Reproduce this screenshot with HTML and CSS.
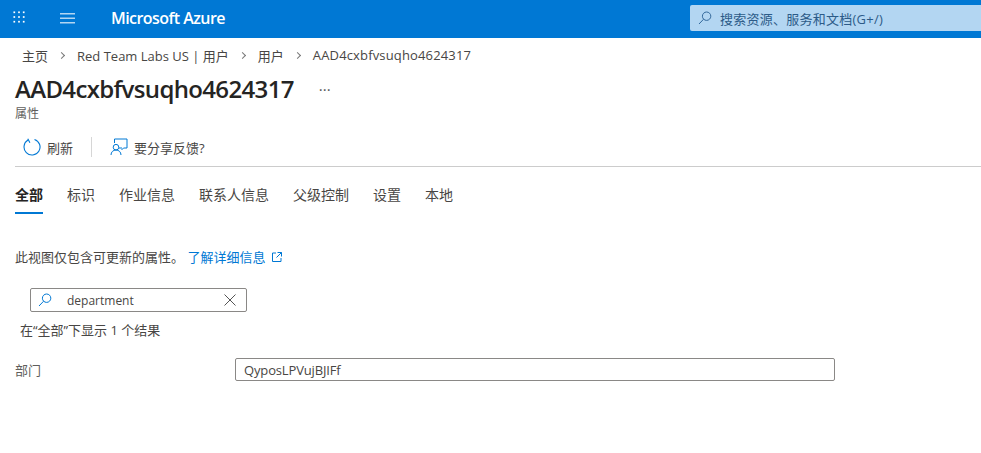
FILE: index.html
```html
<!DOCTYPE html>
<html lang="zh-CN">
<head>
<meta charset="utf-8">
<title>AAD4cxbfvsuqho4624317</title>
<link rel="stylesheet" href="styles.css">
</head>
<body>
<header class="topbar">
  <svg class="waffle" width="12" height="12" viewBox="0 0 14 14" fill="#fff"><rect x="0.5" y="0.5" width="2" height="2"/><rect x="6" y="0.5" width="2" height="2"/><rect x="11.5" y="0.5" width="2" height="2"/><rect x="0.5" y="6" width="2" height="2"/><rect x="6" y="6" width="2" height="2"/><rect x="11.5" y="6" width="2" height="2"/><rect x="0.5" y="11.5" width="2" height="2"/><rect x="6" y="11.5" width="2" height="2"/><rect x="11.5" y="11.5" width="2" height="2"/></svg>
  <svg class="burger" width="15" height="11" viewBox="0 0 15 11" fill="#b3d6f2"><rect y="0" width="15" height="1.5"/><rect y="4.5" width="15" height="1.5"/><rect y="9" width="15" height="1.5"/></svg>
  <div class="brand">Microsoft Azure</div>
  <div class="globalsearch">
    <svg width="14" height="14" viewBox="0 0 14 14" fill="none" stroke="#33699b" stroke-width="1"><circle cx="8.6" cy="5.2" r="4.2"/><path d="M5.6 8.2 1 13"/></svg>
    <span>搜索资源、服务和文档(G+/)</span>
  </div>
</header>
<nav class="crumbs">
  <span>主页</span><i class="chev"></i><span>Red Team Labs US | 用户</span><i class="chev"></i><span>用户</span><i class="chev"></i><span>AAD4cxbfvsuqho4624317</span>
</nav>
<div class="titlerow">
  <h1>AAD4cxbfvsuqho4624317</h1>
  <span class="more">···</span>
</div>
<div class="subtitle">属性</div>
<div class="toolbar">
  <button class="tool">
    <svg width="18" height="18" viewBox="0 0 18 18" fill="none" stroke="#0078d4" stroke-width="1.1"><path d="M11.5 1.400A8 8 0 1 1 5 2.100"/><path d="M4.800 .8 6.900 4.800"/></svg>
    <span>刷新</span>
  </button>
  <i class="vsep"></i>
  <button class="tool">
    <svg width="18" height="18" viewBox="0 0 18 18" fill="none" stroke="#0078d4" stroke-width="1"><path d="M4.500 5V1h12.500v9h-3.500l-2 2"/><path d="M9 10h3"/><circle cx="6" cy="9.200" r="2.800"/><path d="M1 17c0-3 2.200-5 5-5s5 2 5 5"/></svg>
    <span class="dark">要分享反馈?</span>
  </button>
</div>
<div class="tabs">
  <span class="tab active">全部</span>
  <span class="tab">标识</span>
  <span class="tab">作业信息</span>
  <span class="tab">联系人信息</span>
  <span class="tab">父级控制</span>
  <span class="tab">设置</span>
  <span class="tab">本地</span>
</div>
<p class="desc">此视图仅包含可更新的属性。 <a href="#">了解详细信息</a>
  <svg width="10" height="10" viewBox="0 0 10 10" fill="none" stroke="#0078d4" stroke-width="1"><path d="M4 1H.5v8.500h8.500V6"/><path d="M5.500.5h4v4M9.500.5 4.500 5.500"/></svg>
</p>
<div class="filter">
  <svg width="14" height="14" viewBox="0 0 14 14" fill="none" stroke="#0078d4" stroke-width="1"><circle cx="8.600" cy="5.200" r="4.200"/><path d="M5.600 8.200 1 13"/></svg>
  <span class="filtertext">department</span>
  <svg width="12" height="12" viewBox="0 0 12 12" fill="none" stroke="#555" stroke-width="1"><path d="M.5.500l11 11M11.500.500l-11 11"/></svg>
</div>
<div class="results">在“全部”下显示 1 个结果</div>
<div class="field">
  <label>部门</label>
  <div class="value">QyposLPVujBJIFf</div>
</div>
</body>
</html>
```
FILE: styles.css
```css
* { box-sizing: border-box; }
html, body { margin: 0; padding: 0; }
body {
  width: 981px; height: 453px; overflow: hidden; background: #fff;
  font-family: "Open Sans", "Noto Sans CJK SC", sans-serif;
  font-size: 13px; color: #323130;
}
.topbar { height: 38px; background: #0078d4; display: flex; align-items: center; padding-left: 13px; }
.waffle { flex: none; margin-top: -4px; }
.burger { margin-left: 35px; margin-top: -1px; flex: none; }
.brand { margin-left: 36px; width: 579px; margin-top: -3px; color: #fff; font-size: 16px; font-weight: 600; letter-spacing: -0.55px; white-space: nowrap; }
.globalsearch { width: 291px; height: 26px; margin-top: -2px; background: #b3d6f2; border-radius: 2px 0 0 2px; display: flex; align-items: center; padding-left: 8px; gap: 8px; font-size: 13px; letter-spacing: 0.25px; color: #2c5b88; }
.crumbs { height: 36px; padding-bottom: 2px; display: flex; align-items: center; padding-left: 22px; font-size: 13px; color: #484644; white-space: nowrap; }
.crumbs span:last-child { letter-spacing: 0.15px; }
.chev { width: 5px; height: 5px; border-top: 1px solid #777; border-right: 1px solid #777; transform: rotate(45deg); margin: 0 13px 0 11px; }
.titlerow { display: flex; align-items: center; height: 30px; padding-left: 15px; }
h1 { margin: 0; font-size: 24px; font-weight: 600; letter-spacing: -0.65px; color: #252423; line-height: 30px; white-space: nowrap; }
.more { margin-left: 25px; font-size: 15px; color: #555; }
.subtitle { padding-left: 15px; font-size: 12px; color: #605e5c; line-height: 20px; height: 20px; }
.toolbar { margin: 7px 0 0 15px; height: 36px; padding-bottom: 3px; border-bottom: 1px solid #ccc; display: flex; align-items: center; }
.tool { border: 0; background: none; padding: 0; margin: 0; font: inherit; color: #484644; display: flex; align-items: center; gap: 6px; margin-left: 8px; }
.vsep { width: 1px; height: 20px; background: #d6d6d6; margin: 0 10px 0 18px; }
.tabs { margin: 13px 0 0 15px; display: flex; gap: 24px; height: 34px; }
.tab { font-size: 14px; color: #484644; height: 34px; line-height: 30px; white-space: nowrap; }
.tab.active { font-weight: 600; color: #252423; border-bottom: 2px solid #0078d4; }
.desc { margin: 33px 0 0 15px; height: 20px; line-height: 20px; font-size: 13px; color: #484644; }
.desc a { color: #0078d4; text-decoration: none; }
.desc svg { margin-left: 3px; }
.filter { margin: 21px 0 0 30px; width: 217px; height: 24px; border: 1px solid #8a8886; border-radius: 2px; display: flex; align-items: center; padding: 0 10px 0 7px; }
.filtertext { flex: 1; margin-left: 15px; font-size: 12px; color: #484644; }
.results { margin: 8px 0 0 20px; height: 20px; line-height: 20px; font-size: 13px; color: #484644; }
.field { margin: 18px 0 0 15px; display: flex; align-items: center; height: 23px; }
.field label { width: 220px; color: #605e5c; font-size: 13px; }
.value { width: 600px; height: 23px; line-height: 22px; border: 1px solid #8a8886; border-radius: 2px; padding-left: 8px; font-size: 13px; letter-spacing: -0.15px; color: #484644; }
```
